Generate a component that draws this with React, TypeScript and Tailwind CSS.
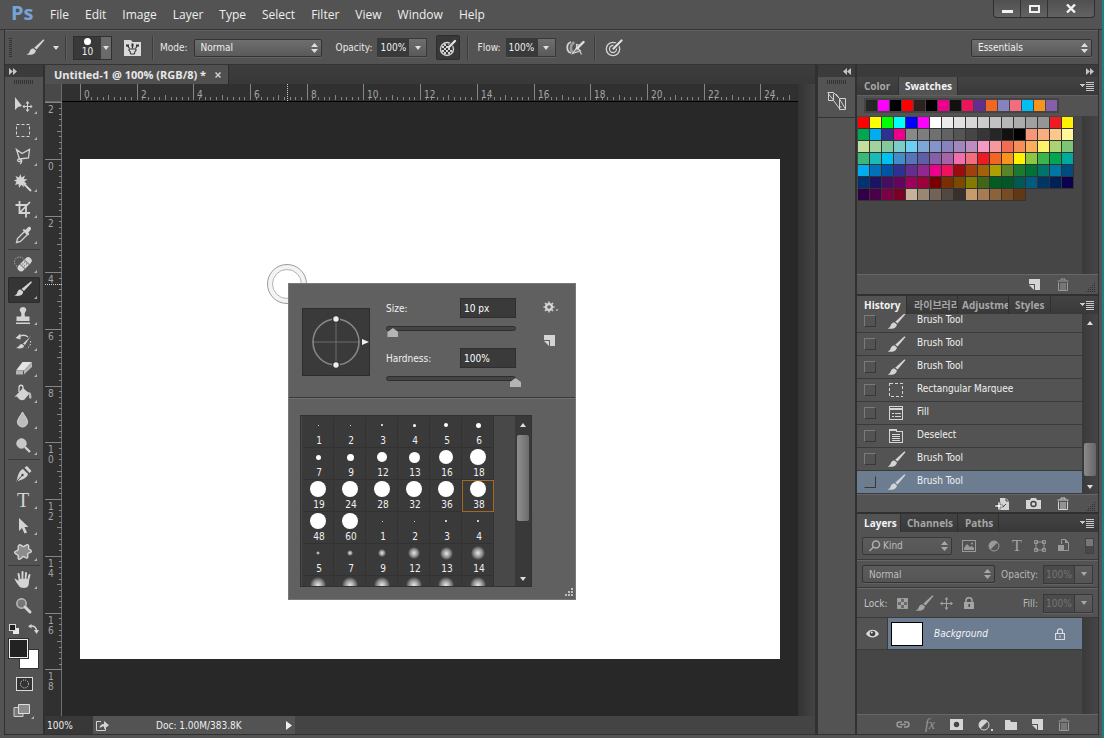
import React, { useState } from "react";

const icon = "#d4d4d4";
const muted = "#9a9a9a";

const menus = ["File", "Edit", "Image", "Layer", "Type", "Select", "Filter", "View", "Window", "Help"];

const recentSwatches = "262626 ff00ff 000000 ff0000 2c211e 000000 ec008c 111111 ed145b 662d91 f26522 8882be f26d7d 00bff3 f7941d 855fa8".split(" ");

const swatches = [
  "ff0000 ffff00 00ff00 00ffff 0000ff ff00ff ffffff ebebeb e1e1e1 d7d7d7 cccccc c2c2c2 b7b7b7 acacac a0a0a0 959595 ed1c24 fff200",
  "00a651 00aeef 2e3192 ec008c 898989 7d7d7d 707070 626262 555555 464646 363636 262626 111111 000000 f7977a f9ad81 fdc68a fff79a",
  "c4df9b a2d39c 82ca9d 7bcdc8 6ecff6 7ea7d8 8493ca 8882be a187be bc8dbf f49ac2 f6989d f26c4f f68e55 fbaf5c fff467 acd372 7cc576",
  "3bb878 1abbb4 00bff3 438cca 5574b9 605ca8 855fa8 a763a8 f06ea9 f26d7d ed1c24 f26522 f7941d fff200 8dc73f 39b54a 00a651 00a99d",
  "00aeef 0072bc 0054a6 2e3192 662d91 92278f ec008c ed145b 9e0b0f a0410d a36209 aba000 598527 1a7b30 007236 00746b 0076a3 004b80",
  "003471 1b1464 440e62 630460 9e005d 9e0039 790000 7b2e00 7d4900 827b00 406618 005e20 005826 005952 005b7f 003663 002157 0d004c",
  "32004b 4b0049 7b0046 7a0026 c7b299 998675 736357 534741 37302d c69c6d a67c52 8c6239 754c24 603913",
].join(" ").split(" ");

// [size, preview diameter, soft edge]
const presets: [number, number, boolean][] = [
  [1, 1, false], [2, 1, false], [3, 2, false], [4, 3, false], [5, 4, false], [6, 5, false],
  [7, 5, false], [9, 7, false], [12, 10, false], [13, 11, false], [16, 14, false], [18, 16, false],
  [19, 16, false], [24, 16, false], [28, 16, false], [32, 16, false], [36, 16, false], [38, 16, false],
  [48, 16, false], [60, 16, false], [1, 1, false], [2, 1, false], [3, 2, false], [4, 2, false],
  [5, 4, true], [7, 6, true], [9, 8, true], [12, 12, true], [13, 13, true], [14, 14, true],
  [16, 16, true], [17, 16, true], [18, 16, true], [21, 16, true], [24, 16, true], [28, 16, true],
];

const history = [
  { name: "Brush Tool", kind: "brush" },
  { name: "Brush Tool", kind: "brush" },
  { name: "Brush Tool", kind: "brush" },
  { name: "Rectangular Marquee", kind: "marquee" },
  { name: "Fill", kind: "fill" },
  { name: "Deselect", kind: "menu" },
  { name: "Brush Tool", kind: "brush" },
  { name: "Brush Tool", kind: "brush" },
];

const BrushIcon: React.FC<{ color?: string }> = ({ color = icon }) => (
  <svg width="19" height="17" viewBox="0 0 19 17" fill={color} aria-hidden="true">
    <path d="M17.2.6c.6-.4 1.400.2 1 .9L10.600 10.600 8.200 8.800z" />
    <path d="M7.400 9.400l2.400 1.900c.2 3.400-3.600 5.500-9.300 4.100 2.800-.6 2.800-2.400 3.800-4.300.7-1.300 1.900-1.800 3.100-1.700z" />
  </svg>
);

const UpDown: React.FC<{ color?: string }> = ({ color = "#dedede" }) => (
  <svg width="7" height="10" viewBox="0 0 7 10" fill={color} className="pointer-events-none absolute top-1/2 right-[4px] -translate-y-1/2" aria-hidden="true">
    <path d="M3.500 0L7 4H0zM3.500 10L0 6h7z" />
  </svg>
);

const Caret: React.FC<{ color?: string; up?: boolean }> = ({ color = "#dedede", up = false }) => (
  <svg width="6" height="4" viewBox="0 0 6 4" fill={color} aria-hidden="true">
    <path d={up ? "M3 0l3 4H0z" : "M0 0h6L3 4z"} />
  </svg>
);

const Chevrons: React.FC<{ left?: boolean }> = ({ left = false }) => (
  <svg width="8" height="7" viewBox="0 0 8 7" fill="#c4c4c4" aria-hidden="true">
    <path d={left ? "M4 0v7L0 3.500zM8 0v7L4 3.500z" : "M0 0l4 3.500L0 7zM4 0l4 3.500L4 7z"} />
  </svg>
);

const TrashIcon: React.FC<{ color?: string }> = ({ color = icon }) => (
  <svg width="12" height="13" viewBox="0 0 12 13" fill="none" stroke={color} aria-hidden="true">
    <path d="M.5 3h11M4 2.500V1h4v1.500M1.500 4.500v8h9v-8M4 5v7M6 5v7M8 5v7" />
  </svg>
);

const NewIcon: React.FC = () => (
  <svg width="11" height="11" viewBox="0 0 11 11" fill={icon} aria-hidden="true">
    <path d="M0 0h11v11H6V5H0z" />
    <path d="M0 6h5v5z" />
  </svg>
);

const ResizeGrip: React.FC<{ light?: boolean }> = ({ light = false }) => (
  <svg width="10" height="10" viewBox="0 0 10 10" fill={light ? "#c0c0c0" : "#2e2e2e"} shapeRendering="crispEdges" aria-hidden="true">
    <path
      d={light
        ? "M8 0h2v2H8zM8 3h2v2H8zM5 3h2v2H5zM8 6h2v2H8zM5 6h2v2H5zM2 6h2v2H2z"
        : "M8 0h1v1H8zM8 2h1v1H8zM6 2h1v1H6zM8 4h1v1H8zM6 4h1v1H6zM4 4h1v1H4zM8 6h1v1H8zM6 6h1v1H6zM4 6h1v1H4zM2 6h1v1H2zM8 8h1v1H8zM6 8h1v1H6zM4 8h1v1H4zM2 8h1v1H2zM0 8h1v1H0z"}
    />
  </svg>
);

const PanelMenu: React.FC<{ label: string }> = ({ label }) => (
  <button aria-label={label} className="mr-1 ml-auto self-center">
    <svg width="14" height="9" viewBox="0 0 14 9" fill="#c8c8c8" shapeRendering="crispEdges" aria-hidden="true">
      <path d="M0 2h5L2.500 5zM6 0h8v1H6zM6 2h8v1H6zM6 4h8v1H6zM6 6h8v1H6zM6 8h8v1H6z" />
    </svg>
  </button>
);

type Tool = { name: string; art: React.ReactNode; corner?: boolean };

const toolGroups: Tool[][] = [
  [
    {
      name: "Move",
      art: (
        <>
          <path d="M7 5v13l3-3 4-1z" fill={icon} />
          <path d="M19.500 9l2 2.500h-1.500v2.500h2.500v-1.500l2 2-2 2v-1.500H20v2.500h1.500l-2 2.500-2-2.500H19V15h-2.500v1.500l-2-2 2-2V14H19v-2.500h-1.500z" fill={icon} />
        </>
      ),
    },
    { name: "Rectangular Marquee", art: <rect x="8.500" y="6.500" width="13" height="12" fill="none" stroke={icon} strokeDasharray="3 2" /> },
    {
      name: "Polygonal Lasso",
      art: <path d="M8.500 5.500l5.500 4 7.500-4-1 8.500-9 1zM11.500 15c-2.500 0-2.500 3 0 2.500s1.500-2 1-2.500c1.500 1.500 2 3-.5 5" fill="none" stroke={icon} strokeWidth="1.300" />,
    },
    {
      name: "Magic Wand",
      art: (
        <>
          <path d="M12.500 4l1 3.500L17 5.500l-1.200 3.400 3.700.6-3.200 2 2.700 2.700-3.500-.4.2 3.700-2.400-2.700-2.300 3.200-.4-3.900L7 15l1.500-3.200L6 10.500l3-1.200L7.500 6l3.400 1.500z" fill={icon} />
          <path d="M15 13l8 8" stroke={icon} strokeWidth="2" />
        </>
      ),
    },
    { name: "Crop", art: <path d="M11.500 5v12H22M7.500 9H18v12.500M12 16.500L22 6" fill="none" stroke={icon} strokeWidth="1.800" /> },
    {
      name: "Eyedropper",
      art: (
        <>
          <path d="M16.500 9.500l-7 7-1 4 4-1 7-7z" fill="none" stroke={icon} strokeWidth="1.300" />
          <path d="M14.500 8l1.500-1 1.500 1 2.200-2.500c2-1.800 4.500.6 2.800 2.600L20.300 10.500l1 1.500-1.200 1.500z" fill={icon} />
        </>
      ),
    },
  ],
  [
    {
      name: "Spot Healing Brush",
      art: (
        <>
          <circle cx="11.500" cy="11" r="5" fill="none" stroke={icon} strokeDasharray="1 1.600" />
          <g transform="rotate(-45 17 13)">
            <rect x="8" y="9.500" width="17" height="7" rx="3.500" fill={icon} />
            <path d="M13.500 9.500v7M19.500 9.500v7" stroke="#777" />
            <path d="M15 11.500h1M17.500 11.500h1M15 14h1M17.500 14h1" stroke="#666" />
          </g>
        </>
      ),
    },
    {
      name: "Brush",
      art: (
        <g fill={icon}>
          <path d="M22.500 4.700c.8-.5 1.600.2 1.100 1L16 14l-2.500-2z" />
          <path d="M12.500 12.600l2.600 2c.2 3.600-3.200 5.200-8.800 4 2.600-.7 2.600-2.300 3.400-4 .6-1.400 1.700-2 2.800-2z" />
        </g>
      ),
    },
    {
      name: "Clone Stamp",
      art: <path d="M15 4c3 0 4.200 3 2.300 5-.8 1.300-.8 2.500-.3 4.500h4.500V18h-13v-4.500H13c.5-2 .5-3.200-.3-4.500C10.800 7 12 4 15 4zM8 19.500h14V21H8z" fill={icon} />,
    },
    {
      name: "History Brush",
      art: (
        <>
          <path d="M21 9l2-2.500-6 9.500-2-1.500zM14 15l2.300 2c-1 2.500-4.500 3-8.300 2 3.500-1 3-4 6-4z" fill={icon} />
          <path d="M11 8c3-2.200 6-2.200 9 0" fill="none" stroke={icon} strokeWidth="1.500" />
          <path d="M12.500 4.500v6L7.500 9z" fill={icon} />
          <path d="M22.500 12c.5 3-.5 6-4 7.500" fill="none" stroke={icon} strokeDasharray="1.500 1.500" />
        </>
      ),
    },
    {
      name: "Eraser",
      art: (
        <>
          <path d="M14.500 7H24l-8 8.500H8z" fill="#e4e4e4" />
          <path d="M24 7.500V12l-8 7.500v-3.700zM8 16h7v3.500H8z" fill="#b5b5b5" />
        </>
      ),
    },
    {
      name: "Paint Bucket",
      art: (
        <>
          <path d="M11 11V6.500c0-3 4-3 4 0V11" fill="none" stroke={icon} strokeWidth="1.300" />
          <path d="M15 7l6.500 5.500-5 6c-2.500 2-6.500-.5-7.500-3l-2.500.5z" fill={icon} />
          <path d="M20 11c3 0 3.500 2 3.500 6-1.500 2-3 0-2.500-3z" fill="#b8b8b8" />
        </>
      ),
    },
    { name: "Blur", art: <path d="M14.500 5c2 4 5 6.500 5 10a5 5 0 01-10 0c0-3.500 3-6 5-10z" fill="#bdbdbd" stroke={icon} /> },
    {
      name: "Dodge",
      art: (
        <>
          <circle cx="13.500" cy="10.500" r="4.700" fill="#c8c8c8" stroke={icon} />
          <path d="M17 14l5 5" stroke={icon} strokeWidth="2.200" />
        </>
      ),
    },
  ],
  [
    {
      name: "Pen",
      art: (
        <>
          <path d="M15 8l5 5c-1 4-5 5.500-11.500 7.500C10 14 11 9.500 15 8zM16.500 6.500L19 5l4.500 5-2 2z" fill={icon} />
          <path d="M9 20l5-5.500" stroke="#444" />
          <circle cx="14.500" cy="14" r="1.200" fill="#444" />
        </>
      ),
    },
    { name: "Horizontal Type", art: <text x="15" y="20" textAnchor="middle" fontSize="20" fontFamily="Liberation Serif, serif" fill={icon}>T</text> },
    { name: "Path Selection", art: <path d="M11 5v13l3-3 2.500 5.500 2.500-1-2.500-5.500h4z" fill={icon} /> },
    {
      name: "Custom Shape",
      art: <path d="M11 6c1.500-1.200 3 1.800 4.500 1.600S18.500 5 20 5.800s.2 3 .8 4 2.700 1 2.500 2.600-3 1.300-3.500 2.400.7 3.200-.6 4-2.700-1.600-4-1.300-2.300 3.200-4.200 2.700-.2-3.300-.9-4S6.800 15 6.600 13.400s3-1.400 3.500-2.500S9.400 7.200 11 6z" fill="#8c8c8c" stroke={icon} strokeWidth="1.400" />,
    },
  ],
  [
    {
      name: "Hand",
      art: (
        <>
          <path d="M10.500 14L7 11.500c-1-.5-.2 1.500 3 6 1 2.500 3 3.500 6 3.500 4 0 5-3 5-6v-3.500l-10.500.5z" fill={icon} />
          <path d="M12 14l-1.500-7M14.500 13V5M17.500 13l.5-7M20 13.500L21.500 8" stroke={icon} strokeWidth="2" strokeLinecap="round" />
          <path d="M12.800 12l-.5-3M16.100 11.500V8M18.900 12l.5-3" stroke="#555" strokeWidth=".6" />
        </>
      ),
    },
    {
      name: "Zoom",
      corner: false,
      art: (
        <>
          <circle cx="13.500" cy="10.500" r="4.700" fill="#777" stroke="#c0c0c0" strokeWidth="1.400" />
          <path d="M17 14l5 5" stroke={icon} strokeWidth="3" strokeLinecap="round" />
        </>
      ),
    },
  ],
];

const ToolButton: React.FC<{ tool: Tool; active: boolean; onClick: () => void }> = ({ tool, active, onClick }) => (
  <button
    aria-label={tool.name}
    aria-pressed={active}
    onClick={onClick}
    className={active ? "h-[26px] w-8 rounded-[2px] bg-[#353535] shadow-[inset_0_0_0_1px_#2b2b2b]" : "h-[26px] w-8"}
  >
    <svg width="32" height="26" viewBox="0 0 32 26" aria-hidden="true">
      {tool.art}
      {tool.corner !== false && <path d="M29 19v3h-3z" fill="#b0b0b0" />}
    </svg>
  </button>
);

const Ruler: React.FC<{ vertical?: boolean; origin: number; from: number; to: number; cursor: number }> = ({ vertical = false, origin, from, to, cursor }) => {
  const ticks = [];
  for (let i = from * 5; i <= to * 5; i++) {
    const at = Math.round(origin + i * 5.669);
    const size = i % 10 === 0 ? 17 : i % 5 === 0 ? 5 : 3;
    ticks.push(
      vertical
        ? <rect key={i} x={17 - size} y={at} width={size} height="1" />
        : <rect key={i} x={at} y={16 - size} width="1" height={size} />
    );
  }
  const labels = [];
  for (let n = from; n <= to; n += 2) {
    const at = Math.round(origin + n * 28.346);
    const text = String(Math.abs(n));
    labels.push(
      ...(vertical
        ? text.split("").map((c, k) => <text key={`${n}-${k}`} x="3" y={at + 11 + k * 10}>{c}</text>)
        : [<text key={n} x={at + 4} y="14">{text}</text>])
    );
  }
  return (
    <svg className={vertical ? "h-0 min-h-full w-[17px]" : "h-[17px] w-full"} aria-hidden="true">
      <g fill="#858585" shapeRendering="crispEdges">{ticks}</g>
      <g fill="#a4a4a4" fontSize="10" fontFamily="DejaVu Sans Condensed, Noto Sans, sans-serif">{labels}</g>
      <path d={vertical ? `M0 ${cursor}h17` : `M${cursor} 0v17`} stroke="#d0d0d0" strokeDasharray="1 1" shapeRendering="crispEdges" />
    </svg>
  );
};

const Select: React.FC<{ label: string; value: string; className: string; dim?: boolean }> = ({ label, value, className, dim = false }) => (
  <span className={`relative flex ${className}`}>
    <select
      aria-label={label}
      defaultValue={value}
      className={`h-[18px] w-full appearance-none rounded-[2px] border border-[#333] bg-linear-to-b pl-1.5 shadow-[0_1px_0_#626262] ${dim ? "from-[#5c5c5c] to-[#555] text-[#bdbdbd]" : "from-[#6e6e6e] to-[#5a5a5a] text-[#f0f0f0]"}`}
    >
      <option>{value}</option>
    </select>
    <UpDown color={dim ? "#a8a8a8" : "#dedede"} />
  </span>
);

const Percent: React.FC<{ label: string; dim?: boolean }> = ({ label, dim = false }) => (
  <label className={`flex items-center gap-[5px] ${dim ? "text-[#b8b8b8]" : "text-[#e8e8e8]"}`}>
    {label}
    <span className="flex h-[19px] border border-[#383838] shadow-[0_1px_0_#626262]">
      <input
        defaultValue="100%"
        className={`w-[30px] pl-[2px] outline-none ${dim ? "bg-[#4b4b4b] text-[#757575]" : "bg-[#393939] text-[#f0f0f0]"}`}
      />
      <button aria-label={`${label} slider`} className={`flex w-[18px] items-center justify-center border-l border-[#383838] bg-linear-to-b ${dim ? "from-[#5c5c5c] to-[#555]" : "from-[#6e6e6e] to-[#5a5a5a]"}`}>
        <Caret color={dim ? "#a8a8a8" : "#dedede"} />
      </button>
    </span>
  </label>
);

const Divider: React.FC = () => <div className="h-6 w-px bg-[#3c3c3c] shadow-[1px_0_0_#5e5e5e]" />;

const MenuBar: React.FC = () => (
  <header className="flex h-[30px] items-start border-b border-[#343434] font-['Open_Sans','Noto_Sans',sans-serif]">
    <span className="ml-[11px] w-[31px] text-[20px] leading-[26px] font-bold text-[#76a4d6]">Ps</span>
    <nav className="flex text-[12px] leading-[30px] text-[#eeeeee]">
      {menus.map((m) => (
        <button key={m} className="px-[8px]">{m}</button>
      ))}
    </nav>
    <div className="mr-[7px] ml-auto flex h-[18px] overflow-hidden rounded-b-[4px] border border-t-0 border-[#2e2e2e] bg-linear-to-b from-[#505050] to-[#636363]">
      <button aria-label="Minimize" className="flex w-[27px] justify-center border-r border-[#333] pt-[10px]">
        <span className="h-[3px] w-[11px] bg-[#f2f2f2]" />
      </button>
      <button aria-label="Maximize" className="flex w-[27px] justify-center border-r border-[#333] pt-[5px]">
        <span className="h-[8px] w-[11px] border-2 border-[#f2f2f2]" />
      </button>
      <button aria-label="Close" className="flex w-[46px] justify-center pt-1">
        <svg width="10" height="9" viewBox="0 0 10 9" stroke="#f2f2f2" strokeWidth="2.400" aria-hidden="true"><path d="M1 .5l8 8M9 .5l-8 8" /></svg>
      </button>
    </div>
  </header>
);

const OptionsBar: React.FC = () => (
  <div className="flex h-[35px] items-center border-t border-b border-t-[#636363] border-b-[#343434] text-[10px]">
    <div className="ml-1 h-5 w-[3px] bg-[repeating-linear-gradient(to_bottom,#333_0_1px,#535353_1px_2px)]" />
    <button aria-label="Tool presets" className="ml-[14px] flex items-center gap-2">
      <BrushIcon />
      <Caret />
    </button>
    <div className="ml-[6px]"><Divider /></div>
    <button aria-label="Brush preset" className="ml-[7px] flex h-[24px] w-[39px] border border-[#2f2f2f] bg-[#393939] text-[#f0f0f0]">
      <span className="flex flex-1 flex-col items-center leading-[14px]">
        <span className="mt-px h-[7px] w-[7px] rounded-full bg-white" />
        10
      </span>
      <span className="flex h-full w-[10px] items-center justify-center bg-[#6a6a6a]"><Caret /></span>
    </button>
    <button aria-label="Toggle brush panel" className="ml-[12px]">
      <svg width="17" height="16" viewBox="0 0 17 16" aria-hidden="true">
        <path d="M0 0h7l1.500 2H17v14H0z" fill="#dadada" />
        <path d="M5 9h7v2h-1l-.5 3h-4L6 11H5z" fill="none" stroke="#333" />
        <path d="M8.500 4.500v4M5.500 8.500L3.500 5.500M11.500 8.500l2-3" stroke="#333" strokeWidth="1.200" />
        <path d="M2 4.500h3v2H2zM12 4.500h3v2h-3zM7.500 3.500h2v3h-2z" fill="#333" />
      </svg>
    </button>
    <div className="ml-[11px]"><Divider /></div>
    <span className="ml-[7px] text-[#e8e8e8]">Mode:</span>
    <Select label="Mode" value="Normal" className="ml-[6px] w-32" />
    <div className="ml-[14px]"><Percent label="Opacity:" /></div>
    <button aria-label="Pressure for opacity" className="ml-[9px] flex h-[25px] w-[24px] items-center justify-center rounded-[2px] border border-[#2d2d2d] bg-[#383838]">
      <svg width="18" height="18" viewBox="0 0 18 18" aria-hidden="true">
        <circle cx="8" cy="10" r="6.500" fill="#3a3a3a" stroke={icon} strokeWidth="1.400" />
        <path d="M5 5h2v2H5zM9 5h2v2H9zM3 7h2v2H3zM7 7h2v2H7zM5 9h2v2H5zM9 9h2v2H9zM3 11h2v2H3zM7 11h2v2H7zM11 11h2v2h-2zM5 13h2v2H5zM9 13h2v2H9z" fill={icon} />
        <path d="M10 8l6-6.500" stroke="#383838" strokeWidth="4" />
        <path d="M10 8l6-6" stroke="#e2e2e2" strokeWidth="2.400" strokeLinecap="round" />
      </svg>
    </button>
    <div className="ml-[7px]"><Divider /></div>
    <div className="ml-[9px]"><Percent label="Flow:" /></div>
    <button aria-label="Airbrush" className="ml-[10px]">
      <svg width="19" height="16" viewBox="0 0 19 16" fill="none" aria-hidden="true">
        <path d="M5 2C0 3.500 0 11.500 5 13" stroke={icon} strokeWidth="1.800" />
        <path d="M8.500 2.500C4 4 4 10.500 7 12.500" stroke="#9c9c9c" strokeWidth="2.500" />
        <path d="M6.500 13.500l4.500-6 3.500 3.500-5 1.500zM10.500 8V4.500L13 5M13.500 10.500l2 4" fill="#777" stroke={icon} strokeWidth="1.200" />
        <path d="M11 8.500l6.500-6.500" stroke="#e2e2e2" strokeWidth="2.400" strokeLinecap="round" />
      </svg>
    </button>
    <div className="ml-[9px]"><Divider /></div>
    <button aria-label="Pressure for size" className="ml-[10px]">
      <svg width="19" height="18" viewBox="0 0 19 18" fill="none" aria-hidden="true">
        <circle cx="8" cy="10" r="6.700" stroke={icon} strokeWidth="1.300" />
        <circle cx="8" cy="10" r="3.500" stroke={icon} strokeWidth="1.300" />
        <path d="M9 9l7-7" stroke="#535353" strokeWidth="4.500" />
        <path d="M8.500 9.500l8-8" stroke="#e2e2e2" strokeWidth="2.200" strokeLinecap="round" />
      </svg>
    </button>
    <Select label="Workspace" value="Essentials" className="mr-[6px] ml-auto w-[121px]" />
  </div>
);

const Toolbar: React.FC<{ active: string; onPick: (name: string) => void }> = ({ active, onPick }) => (
  <aside className="flex w-[38px] flex-col items-center bg-[#535353]">
    <div className="flex h-3 w-full items-center bg-[#3b3b3b] pl-[4px]"><Chevrons /></div>
    <div className="mt-[3px] mb-2 h-1 w-5 bg-[repeating-linear-gradient(to_right,#333_0_1px,#535353_1px_2px)]" />
    {toolGroups.map((group, i) => (
      <div key={i} className={i > 0 ? "flex flex-col border-t border-[#3a3a3a] pt-px" : "flex flex-col pb-px"}>
        {group.map((tool) => (
          <ToolButton key={tool.name} tool={tool} active={tool.name === active} onClick={() => onPick(tool.name)} />
        ))}
      </div>
    ))}
    <div className="mt-[5px] flex w-[30px] items-center justify-between">
      <button aria-label="Default colors">
        <svg width="10" height="10" viewBox="0 0 10 10" aria-hidden="true">
          <rect x="4" y="4" width="6" height="6" fill="#e8e8e8" />
          <rect x=".5" y=".5" width="6" height="6" fill="#222" stroke="#d8d8d8" />
        </svg>
      </button>
      <button aria-label="Swap colors">
        <svg width="11" height="10" viewBox="0 0 11 10" fill={icon} aria-hidden="true">
          <path d="M3 2c4 0 5.500 1.500 5.500 5" fill="none" stroke={icon} strokeWidth="1.400" />
          <path d="M3.500 0v4.500L0 2.200zM6 6h5L8.500 10z" />
        </svg>
      </button>
    </div>
    <div className="mt-[5px] grid h-[30px] w-[30px] grid-cols-1 grid-rows-1">
      <button aria-label="Background color" className="col-start-1 row-start-1 h-5 w-5 place-self-end border border-[#333] bg-white" />
      <button aria-label="Foreground color" className="col-start-1 row-start-1 h-[19px] w-[19px] border border-[#eee] bg-[#222] outline outline-[#2e2e2e]" />
    </div>
    <button aria-label="Quick mask" className="mt-2">
      <svg width="17" height="14" viewBox="0 0 17 14" aria-hidden="true">
        <rect x=".5" y=".5" width="16" height="13" fill="#333" stroke="#dcdcdc" />
        <circle cx="8.500" cy="7" r="4" fill="none" stroke="#e6e6e6" strokeDasharray="1 1.100" />
      </svg>
    </button>
    <button aria-label="Screen mode" className="mt-3">
      <svg width="22" height="17" viewBox="0 0 22 17" aria-hidden="true">
        <path d="M1 4.500h9v9H1z" fill="#777" stroke="#cfcfcf" />
        <path d="M5.500 1.500h11v9h-11z" fill="#8c8c8c" stroke="#dedede" />
        <path d="M21 13v3h-3z" fill="#b0b0b0" />
      </svg>
    </button>
  </aside>
);

const thumb =
  "[&::-webkit-slider-thumb]:h-[9px] [&::-webkit-slider-thumb]:w-[11px] [&::-webkit-slider-thumb]:appearance-none [&::-webkit-slider-thumb]:bg-[#b4b4b4] [&::-webkit-slider-thumb]:[clip-path:polygon(50%_0,100%_45%,100%_100%,0_100%,0_45%)]";

const BrushField: React.FC<{ label: string; value: string; amount: number }> = ({ label, value, amount }) => (
  <div>
    <div className="flex h-5 items-center justify-between">
      <label htmlFor={label}>{label}</label>
      <input id={label} defaultValue={value} className="h-5 w-14 border border-[#2f2f2f] bg-[#3a3a3a] pl-[3px] text-white outline-none" />
    </div>
    <div className="mt-2 h-[5px] rounded-full border border-[#2e2e2e] bg-[#444]">
      <input type="range" aria-label={`${label} slider`} defaultValue={amount} className={`mt-px -ml-1.5 block h-[9px] w-[140px] appearance-none bg-transparent ${thumb}`} />
    </div>
  </div>
);

const BrushPopup: React.FC = () => {
  const [picked, setPicked] = useState(17);
  return (
    <div role="dialog" aria-label="Brush presets" className="absolute top-[124px] left-[208px] w-72 border border-[#787878] bg-[#606060] text-[10px] text-[#f0f0f0]">
      <div className="flex h-[114px] border-b border-[#3a3a3a] pl-[13px]">
        <svg width="68" height="68" viewBox="0 0 68 68" fill="none" className="mt-6" aria-hidden="true">
          <rect x=".5" y=".5" width="67" height="67" fill="#3a3a3a" stroke="#2d2d2d" />
          <path d="M11 34h46M34 11v46" stroke="#6c6c6c" />
          <circle cx="34" cy="34" r="23" stroke="#868686" strokeWidth="1.600" />
          <circle cx="34" cy="11" r="4" fill="#3a3a3a" /><circle cx="34" cy="57" r="4" fill="#3a3a3a" />
          <circle cx="34" cy="11" r="2.700" fill="#eee" /><circle cx="34" cy="57" r="2.700" fill="#eee" />
          <path d="M60 31l7 3-7 3z" fill="#eee" />
        </svg>
        <div className="mt-[14px] ml-4 flex w-[130px] flex-col gap-[17px]">
          <BrushField label="Size:" value="10 px" amount={5} />
          <BrushField label="Hardness:" value="100%" amount={100} />
        </div>
        <div className="mt-[17px] ml-[27px] flex flex-col items-start gap-[22px]">
          <button aria-label="Preset options">
            <svg width="16" height="12" viewBox="0 0 16 12" aria-hidden="true">
              <circle cx="6" cy="6" r="3" fill="none" stroke={icon} strokeWidth="2" />
              <path d="M6 .5v11M.5 6h11M2 2l8 8M10 2l-8 8" stroke={icon} strokeWidth="1.500" />
              <circle cx="6" cy="6" r="1.800" fill="#606060" />
              <path d="M12.500 8.500h3L14 10z" fill={icon} />
            </svg>
          </button>
          <button aria-label="New preset" className="ml-px"><NewIcon /></button>
        </div>
      </div>
      <div className="border-t border-[#707070] px-[11px] pt-4 pb-[12px]">
        <div className="flex h-[172px] w-[232px] border border-[#323232] bg-[#484848]">
          <div className="grid w-[193px] grid-cols-6 content-start overflow-hidden pl-px">
            {presets.map(([size, dot, soft], i) => (
              <button
                key={i}
                aria-label={`Brush ${size}`}
                onClick={() => setPicked(i)}
                className={`flex h-8 flex-col items-center border leading-[12px] ${i === picked ? "border-[#a5681f] bg-[#3a3a3a]" : "border-t-[#3a3a3a] border-r-[#323232] border-b-[#323232] border-l-[#3a3a3a] bg-[#3a3a3a]"}`}
              >
                <span className="flex h-[16px] items-center">
                  <span
                    className={soft ? "rounded-full bg-[radial-gradient(circle,#e8e8e8_0%,#8a8a8a_45%,#3a3a3a_72%)]" : "rounded-full bg-white"}
                    style={{ width: dot, height: dot }}
                  />
                </span>
                {i < 30 ? <span className="pt-[2px] pl-[2px]">{size}</span> : <span className="h-[14px]" />}
              </button>
            ))}
          </div>
          <div className="ml-auto flex w-4 flex-col items-center justify-between bg-[#393939] pt-[7px] pb-[5px]">
            <Caret up />
            <div className="mt-2 mb-auto h-[86px] w-3 rounded-[2px] bg-linear-to-r from-[#8f8f8f] to-[#6c6c6c]" />
            <Caret />
          </div>
        </div>
      </div>
      <div className="absolute right-[2px] bottom-px"><ResizeGrip light /></div>
    </div>
  );
};

const DocumentArea: React.FC = () => (
  <main className="flex min-w-0 flex-1 flex-col bg-[#282828]">
    <div className="flex h-[19px] bg-linear-to-b from-[#3d3d3d] to-[#383838]">
      <div className="flex w-[184px] items-center justify-between border-r border-[#2d2d2d] bg-[#505050] pr-[7px] pl-[9px] font-['Open_Sans','Noto_Sans',sans-serif] text-[11px] leading-[16px] font-bold whitespace-nowrap text-[#e8e8e8]">
        Untitled-1 @ 100% (RGB/8) *
        <button aria-label="Close document">
          <svg width="6" height="6" viewBox="0 0 6 6" stroke="#cfcfcf" strokeWidth="1.500" aria-hidden="true"><path d="M.5.5l5 5M5.500.5l-5 5" /></svg>
        </button>
      </div>
    </div>
    <div className="flex flex-1">
      <div className="flex w-[17px] flex-col bg-[#303030]">
        <div className="h-[18px] border-r border-b border-[#6a6a6a] bg-[#484848]" />
        <div className="flex-1 border-r border-[#6e6e6e]"><Ruler vertical origin={57} from={-2} to={18} cursor={182} /></div>
      </div>
      <div className="flex min-w-0 flex-1 flex-col">
        <div className="h-[18px] border-b border-black bg-[#303030]"><Ruler origin={18} from={0} to={25} cursor={225} /></div>
        <div className="flex flex-1 items-center justify-center">
          <div className="relative h-[500px] w-[700px] shrink-0 bg-white">
            <svg width="42" height="42" viewBox="0 0 42 42" fill="none" className="absolute top-[104px] left-[186px]" aria-hidden="true">
              <circle cx="21" cy="21" r="17" stroke="#f3f3f3" strokeWidth="5" />
              <circle cx="21" cy="21" r="19.500" stroke="#9c9c9c" />
              <circle cx="21" cy="21" r="14.500" stroke="#b4b4b4" />
            </svg>
            <BrushPopup />
          </div>
        </div>
      </div>
      <div className="w-[17px] bg-linear-to-r from-[#333] to-[#444]" />
    </div>
    <footer className="flex h-[18px] items-center bg-[#444] text-[10px] text-[#ededed]">
      <input aria-label="Zoom level" defaultValue="100%" className="h-full w-12 bg-[#383838] pl-0.5 outline-none" />
      <div className="flex h-full w-[202px] items-center bg-[#535353] pl-[3px]">
        <button aria-label="Share">
          <svg width="13" height="11" viewBox="0 0 13 11" fill="none" stroke={icon} aria-hidden="true">
            <path d="M5 1.500H.5v9h9V8" />
            <path d="M3.500 8.500c0-3 1.500-4.500 4.500-4.500V1l5 4.200L8 9V6.500c-2 0-3.500.5-4.500 2z" fill={icon} stroke="none" />
          </svg>
        </button>
        <span className="ml-[47px]">Doc: 1.00M/383.8K</span>
        <button aria-label="Status options" className="mr-[3px] ml-auto">
          <svg width="6" height="9" viewBox="0 0 6 9" fill="#eee" aria-hidden="true"><path d="M0 0l6 4.500L0 9z" /></svg>
        </button>
      </div>
    </footer>
  </main>
);

const Tab: React.FC<{ label: string; active?: boolean; className?: string }> = ({ label, active = false, className = "px-[7px]" }) => (
  <button
    role="tab"
    aria-selected={active}
    className={`overflow-hidden border-r border-[#303030] text-left font-bold whitespace-nowrap ${active ? "bg-[#535353] text-[#f2f2f2]" : "text-[#a6a6a6]"} ${className}`}
  >
    {label}
  </button>
);

const tabBar = "flex h-[18px] bg-linear-to-b from-[#434343] to-[#393939] text-[10px] font-['Open_Sans','Noto_Sans_CJK_KR',sans-serif]";

const SwatchesPanel: React.FC = () => (
  <section>
    <div role="tablist" className={tabBar}>
      <Tab label="Color" className="w-[42px] px-[7px]" />
      <Tab label="Swatches" active className="w-[59px] px-[6px]" />
      <PanelMenu label="Swatches menu" />
    </div>
    <div className="h-[21px] border-t border-[#606060] pt-[2px] pl-[7px]">
      <div className="flex w-[195px] gap-px border border-[#444] bg-[#444] p-px">
        {recentSwatches.map((c, i) => (
          <button key={i} aria-label={`#${c}`} className="h-[11px] w-[11px]" style={{ backgroundColor: `#${c}` }} />
        ))}
      </div>
    </div>
    <div className="flex h-[158px] bg-[#464646]">
      <div className="flex w-[225px] flex-wrap content-start pt-px pl-px">
        {swatches.map((c, i) => (
          <button key={i} aria-label={`#${c}`} className="h-3 w-3 border-r border-b border-[#333]" style={{ backgroundColor: `#${c}` }} />
        ))}
      </div>
      <div className="flex-1 bg-linear-to-r from-[#3a3a3a] to-[#454545]" />
    </div>
    <div className="flex h-5 items-center justify-end border-t border-[#666]">
      <button aria-label="New swatch"><NewIcon /></button>
      <button aria-label="Delete swatch" className="ml-[17px]"><TrashIcon color={muted} /></button>
      <span className="mt-[6px] mr-[2px] ml-[17px]"><ResizeGrip /></span>
    </div>
  </section>
);

const HistoryIcon: React.FC<{ kind: string }> = ({ kind }) => {
  if (kind === "brush") return <BrushIcon />;
  return (
    <svg width="14" height="14" viewBox="0 0 14 14" fill="none" stroke={icon} className="ml-[2px]" shapeRendering="crispEdges" aria-hidden="true">
      {kind === "marquee" && <rect x=".5" y=".5" width="13" height="13" strokeDasharray="3 2" />}
      {kind === "fill" && <path d="M.5.5h13v13H.5zM0 2.500h14M0 3.500h14M3 7.500h2M6 7.500h6M3 10.500h2M6 10.500h6" />}
      {kind === "menu" && <path d="M.5.5h7v2h6v11H.5zM1 1.500h6M3 5.500h8M3 7.500h8M3 9.500h8M3 11.500h8" />}
    </svg>
  );
};

const HistoryPanel: React.FC = () => (
  <section className="border-t-2 border-[#303030]">
    <div role="tablist" className={tabBar}>
      <Tab label="History" active className="w-[50px] px-[7px]" />
      <Tab label="라이브러리" className="w-[51px] pl-[7px]" />
      <Tab label="Adjustme" className="w-[51px] pl-[4px]" />
      <Tab label="Styles" className="w-[42px] px-[6px]" />
      <PanelMenu label="History menu" />
    </div>
    <div className="flex h-[180px]">
      <ul className="flex flex-1 flex-col justify-end overflow-hidden text-[#f0f0f0]">
        {history.map((h, i) => (
          <li key={i} className={`flex h-[23px] shrink-0 items-center border-b border-[#3a3a3a] pl-[7px] ${i === history.length - 1 ? "bg-[#6c7d92]" : ""}`}>
            <input type="checkbox" aria-label={`Source state ${i + 1}`} className="h-3 w-3 shrink-0 appearance-none border border-t-[#7a7a7a] border-r-[#383838] border-b-[#383838] border-l-[#7a7a7a]" />
            <span className="ml-[11px] w-[30px]"><HistoryIcon kind={h.kind} /></span>
            <span className="pb-[3px]">{h.name}</span>
          </li>
        ))}
      </ul>
      <div className="flex w-4 flex-col items-center justify-between bg-linear-to-r from-[#3a3a3a] to-[#454545] pt-[7px] pb-[5px]">
        <Caret up />
        <div className="mt-auto mb-[9px] h-[33px] w-3 rounded-[2px] bg-linear-to-r from-[#8a8a8a] to-[#666]" />
        <Caret />
      </div>
    </div>
    <div className="flex h-[18px] items-center justify-end border-t border-[#666]">
      <button aria-label="New document from state">
        <svg width="15" height="12" viewBox="0 0 15 12" aria-hidden="true">
          <path d="M5 0h6l3 3v9H5z" fill={icon} />
          <path d="M11 0v3h3M8 9l3-3" fill="none" stroke="#444" />
          <path d="M0 7h3V4h2v3h3v2H5v3H3V9H0z" fill="#fff" stroke="#444" strokeWidth=".6" />
        </svg>
      </button>
      <button aria-label="New snapshot" className="ml-4">
        <svg width="15" height="11" viewBox="0 0 15 11" aria-hidden="true">
          <path d="M0 2h4l1-2h5l1 2h4v9H0z" fill={icon} />
          <circle cx="7.500" cy="6" r="2.500" fill="none" stroke="#444" strokeWidth="1.400" />
        </svg>
      </button>
      <button aria-label="Delete state" className="ml-4"><TrashIcon /></button>
      <span className="mt-[6px] mr-[2px] ml-[17px]"><ResizeGrip /></span>
    </div>
  </section>
);

const LayersPanel: React.FC = () => (
  <section className="flex flex-1 flex-col border-t-2 border-[#303030]">
    <div role="tablist" className={tabBar}>
      <Tab label="Layers" active className="w-[44px] px-[7px]" />
      <Tab label="Channels" className="w-[57px] px-[6px]" />
      <Tab label="Paths" className="w-[41px] px-[7px]" />
      <PanelMenu label="Layers menu" />
    </div>
    <div className="flex h-[28px] items-center border-b border-[#3a3a3a] pl-[5px]">
      <span className="relative flex w-[90px]">
        <select aria-label="Filter kind" defaultValue="Kind" className="h-[18px] w-full appearance-none rounded-[2px] border border-[#383838] bg-linear-to-b from-[#5c5c5c] to-[#555] pl-[20px] text-[#bdbdbd]">
          <option>Kind</option>
        </select>
        <svg width="12" height="12" viewBox="0 0 12 12" fill="none" stroke="#adadad" strokeWidth="1.500" className="pointer-events-none absolute top-[3px] left-[7px]" aria-hidden="true">
          <circle cx="7" cy="4.500" r="3.500" /><path d="M4.500 7l-4 4" />
        </svg>
        <UpDown color="#a8a8a8" />
      </span>
      <div className="ml-[10px] flex flex-1 items-center justify-between pr-1">
        <button aria-label="Pixel layers">
          <svg width="14" height="12" viewBox="0 0 14 12" aria-hidden="true"><rect x=".5" y=".5" width="13" height="11" fill="none" stroke={muted} /><path d="M2 10V8l3-4 3 3 2-1 2 2v2z" fill={muted} /><circle cx="10" cy="3.500" r="1" fill={muted} /></svg>
        </button>
        <button aria-label="Adjustment layers">
          <svg width="12" height="12" viewBox="0 0 12 12" aria-hidden="true"><circle cx="6" cy="6" r="5" fill="#555" stroke={muted} /><path d="M2.500 9.500l7-7A5 5 0 002.500 2.500a5 5 0 000 7z" fill={muted} /></svg>
        </button>
        <button aria-label="Type layers" className="font-['Liberation_Serif',serif] text-[16px] leading-[16px] text-[#a4a4a4]">T</button>
        <button aria-label="Shape layers">
          <svg width="12" height="12" viewBox="0 0 12 12" fill="#535353" stroke={muted} aria-hidden="true"><path d="M2 2h8v8H2zM.5.5h3v3h-3zM8.500.5h3v3h-3zM.5 8.500h3v3h-3zM8.500 8.500h3v3h-3z" /></svg>
        </button>
        <button aria-label="Smart objects">
          <svg width="11" height="13" viewBox="0 0 11 13" aria-hidden="true"><path d="M3.500 5V.5h4l3 3v8H6" fill="none" stroke={muted} /><path d="M7 0v4h4M0 6h6v6H0z" fill={muted} /></svg>
        </button>
        <button aria-label="Filter toggle" className="ml-1 h-4 w-[9px] border border-[#424242] bg-linear-to-b from-[#777] from-50% to-[#484848] to-50%" />
      </div>
    </div>
    <div className="flex h-[28px] items-center justify-between border-t border-b border-t-[#666] border-b-[#3a3a3a] pr-[5px] pl-[5px]">
      <Select label="Blend mode" value="Normal" dim className="w-[133px]" />
      <Percent label="Opacity:" dim />
    </div>
    <div className="flex h-[30px] items-center border-t border-b border-t-[#666] border-b-[#3a3a3a] pr-[5px] pl-[7px] text-[#c4c4c4]">
      Lock:
      <button aria-label="Lock transparent pixels" className="ml-[9px]">
        <svg width="11" height="11" viewBox="0 0 11 11" shapeRendering="crispEdges" aria-hidden="true"><rect x=".5" y=".5" width="10" height="10" fill="#6a6a6a" stroke={muted} /><path d="M1 1h3v3H1zM7 1h3v3H7zM4 4h3v3H4zM1 7h3v3H1zM7 7h3v3H7z" fill="#a4a4a4" /></svg>
      </button>
      <button aria-label="Lock image pixels" className="ml-[7px]"><BrushIcon color="#a4a4a4" /></button>
      <button aria-label="Lock position" className="ml-[6px]">
        <svg width="13" height="13" viewBox="0 0 13 13" fill="#a4a4a4" stroke="#a4a4a4" aria-hidden="true"><path d="M6.500 2v9M2 6.500h9" /><path d="M6.500 0l2 2.500h-4zM6.500 13l-2-2.500h4zM0 6.500l2.500-2v4zM13 6.500l-2.500 2v-4z" stroke="none" /></svg>
      </button>
      <button aria-label="Lock all" className="ml-[11px]">
        <svg width="10" height="12" viewBox="0 0 10 12" aria-hidden="true"><path d="M2 5V3.500C2-.2 8-.2 8 3.500V5" fill="none" stroke="#a4a4a4" strokeWidth="1.500" /><path d="M0 5h10v7H0z" fill="#a4a4a4" /><path d="M4.500 7h1.500v3H4.500z" fill="#444" /></svg>
      </button>
      <div className="ml-auto"><Percent label="Fill:" dim /></div>
    </div>
    <div className="flex flex-1 bg-[#464646]">
      <div className="flex-1">
        <div className="flex h-8 items-center border-b border-[#3a3a3a] bg-[#6c7d92]">
          <button aria-label="Layer visibility" className="flex h-full w-[31px] items-center justify-center border-r border-[#3a3a3a] bg-[#535353]">
            <svg width="13" height="9" viewBox="0 0 13 9" aria-hidden="true"><path d="M0 5C2.500-.8 10.500-.8 13 5c-3 4.500-10 4.500-13 0z" fill="#dcdcdc" /><circle cx="6.500" cy="4.500" r="2.800" fill="#444" /><circle cx="5.800" cy="3.600" r="1" fill="#eee" /></svg>
          </button>
          <div className="ml-[3px] h-6 w-8 border border-black bg-white" />
          <span className="ml-[11px] text-[#f4f4f4] italic">Background</span>
          <svg width="10" height="12" viewBox="0 0 10 12" fill="none" stroke="#dcdcdc" className="mr-[17px] ml-auto" aria-hidden="true"><path d="M2.500 5V3.500c0-3.500 5-3.500 5 0V5M.5 5.500h9v6h-9zM5 7.500v2" strokeWidth="1.200" /></svg>
        </div>
      </div>
      <div className="w-4 bg-linear-to-r from-[#3a3a3a] to-[#454545]" />
    </div>
    <div className="flex h-[20px] items-center justify-end gap-[15px] border-t border-[#666] pr-[28px]">
      <button aria-label="Link layers">
        <svg width="14" height="7" viewBox="0 0 14 7" fill="none" stroke={muted} strokeWidth="1.500" aria-hidden="true"><path d="M6 1H3.500a2.500 2.500 0 000 5H6M8 1h2.500a2.500 2.500 0 010 5H8M4 3.500h6" /></svg>
      </button>
      <button aria-label="Layer style" className="font-['Liberation_Serif',serif] text-[14px] leading-[14px] text-[#9a9a9a] italic">fx</button>
      <button aria-label="Add mask">
        <svg width="13" height="11" viewBox="0 0 13 11" aria-hidden="true"><path d="M0 0h13v11H0z" fill={icon} /><circle cx="6.500" cy="5.500" r="2.700" fill="#444" /></svg>
      </button>
      <button aria-label="New adjustment layer">
        <svg width="16" height="12" viewBox="0 0 16 12" aria-hidden="true"><circle cx="6" cy="6" r="5" fill="#555" stroke={icon} /><path d="M2.500 9.500l7-7A5 5 0 002.500 2.500a5 5 0 000 7z" fill={icon} /><path d="M13 10h2v2h-2z" fill={icon} /></svg>
      </button>
      <button aria-label="New group" className="-ml-1">
        <svg width="12" height="10" viewBox="0 0 12 10" fill={icon} aria-hidden="true"><path d="M0 0h5l1 2h6v8H0z" /></svg>
      </button>
      <button aria-label="New layer"><NewIcon /></button>
      <button aria-label="Delete layer"><TrashIcon color={muted} /></button>
    </div>
  </section>
);

export default function App() {
  const [tool, setTool] = useState("Brush");

  return (
    <div className="flex min-h-screen w-full flex-col border-r-2 border-[#1d7f86] bg-[#535353] font-['DejaVu_Sans_Condensed','Noto_Sans',sans-serif] text-[10px] select-none">
      <MenuBar />
      <div className="mr-[3px] ml-1 flex flex-1 flex-col border-r border-b border-l border-[#303030]">
        <OptionsBar />
        <div className="flex flex-1">
          <Toolbar active={tool} onPick={setTool} />
          <div className="w-[2px] bg-[#303030]" />
          <DocumentArea />
          <div className="w-[3px] bg-[#303030]" />
          <aside className="w-[37px]">
            <div className="flex h-3 items-center justify-end bg-[#3b3b3b] pr-1"><Chevrons left /></div>
            <div className="flex h-[41px] flex-col items-center border-b border-[#333] pt-[3px]">
              <div className="h-1 w-5 bg-[repeating-linear-gradient(to_right,#333_0_1px,#535353_1px_2px)]" />
              <button aria-label="History panel" className="mt-[7px]">
                <svg width="20" height="20" viewBox="0 0 20 20" fill="none" stroke={icon} aria-hidden="true">
                  <path d="M.5 1.500h6l6 6M1.500 1.500v8h5v-7M1.500 3l5 6M6.500 9.500l6 8M12.500 7.500h6v11h-6zM12.500 8l6 10M12.500 16h2M9 3l3 4" />
                </svg>
              </button>
            </div>
          </aside>
          <div className="w-[2px] bg-[#303030]" />
          <aside className="flex w-[241px] flex-col text-[10px]">
            <div className="flex h-3 items-center justify-end bg-[#3b3b3b] pr-1"><Chevrons /></div>
            <SwatchesPanel />
            <HistoryPanel />
            <LayersPanel />
          </aside>
        </div>
      </div>
      <div className="h-[3px]" />
    </div>
  );
}
